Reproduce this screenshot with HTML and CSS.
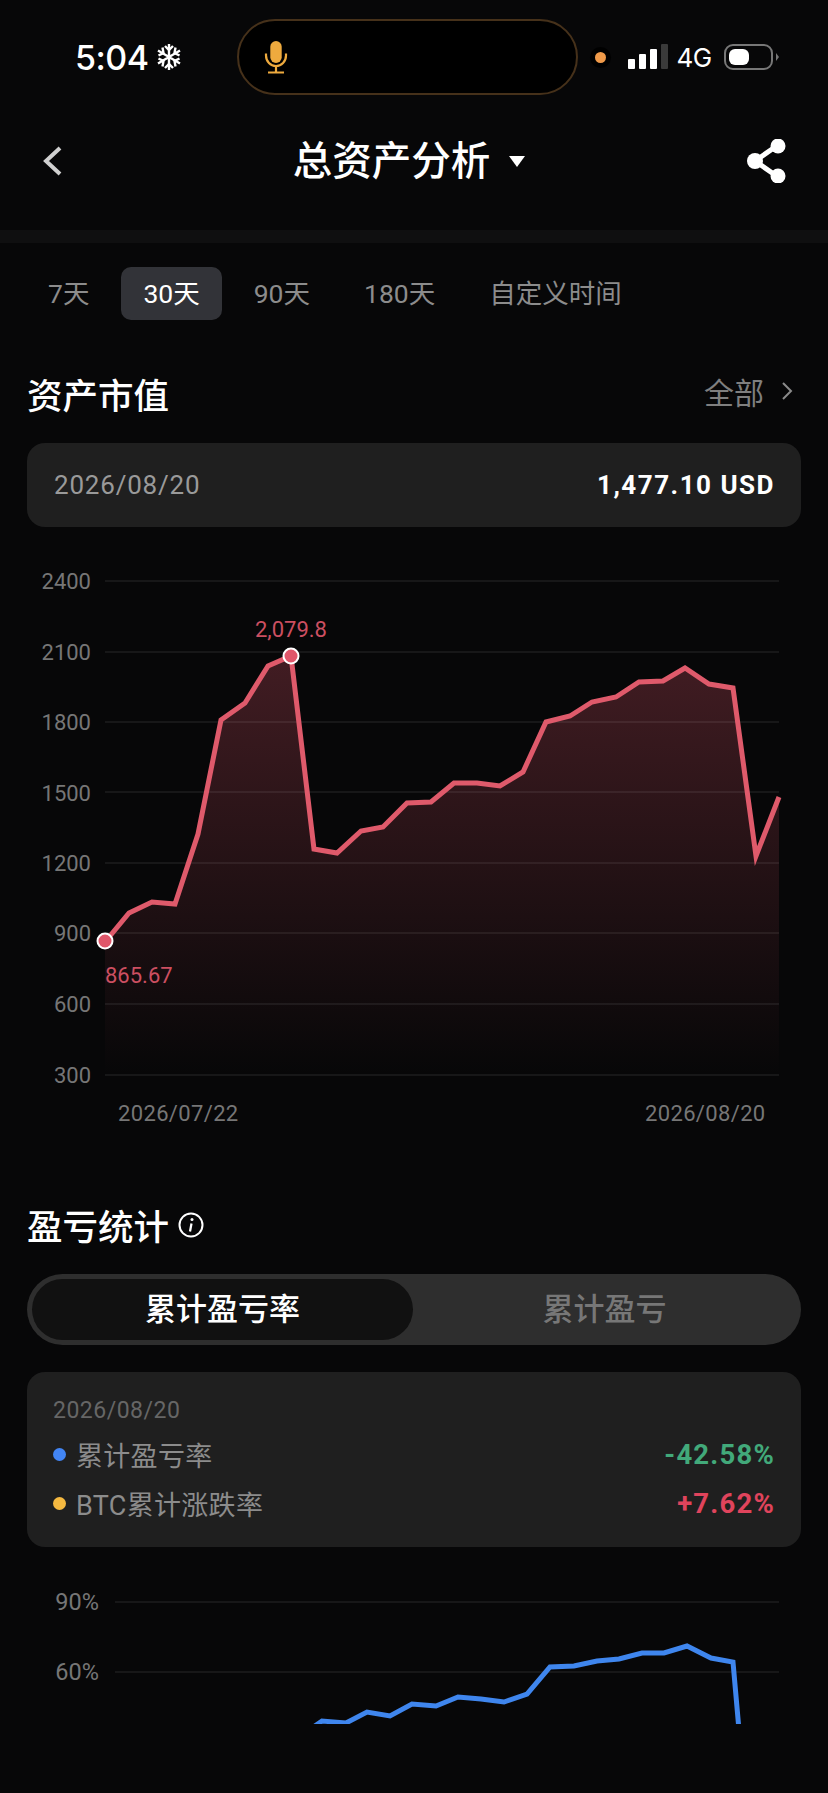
FILE: index.html
```html
<!DOCTYPE html>
<html lang="zh-CN">
<head>
    <meta charset="UTF-8">
    <meta name="viewport" content="width=device-width, initial-scale=1.0">
    <title>总资产分析</title>
    <link rel="stylesheet" href="styles.css">
</head>
<body>
    <div class="status-bar">
        <span class="time">5:04</span>
        <svg class="snow" width="26" height="28" viewBox="0 0 26 28">
            <g stroke="#fff" stroke-width="2.4" fill="none">
                <path d="M13 1V27M2 7.5L24 20.5M24 7.5L2 20.5"/>
                <path d="M9 3L13 7L17 3M9 25L13 21L17 25"/>
                <path d="M2.5 12.5L7.5 10L6.5 4.5M23.5 15.5L18.500 18L19.500 23.500"/>
                <path d="M23.500 12.500L18.500 10L19.500 4.500M2.500 15.500L7.500 18L6.500 23.500"/>
            </g>
        </svg>
        <div class="island">
            <svg class="mic" width="24" height="34" viewBox="0 0 24 34">
                <rect x="6.300" y="1" width="11.400" height="22" rx="5.700" fill="#eeaa3e"/>
                <path d="M2 13.500V15.500C2 21.500 6.500 26 12 26C17.500 26 22 21.500 22 15.500V13.500M12 26V32.500M4 32.500H20" stroke="#eeaa3e" stroke-width="2.200" fill="none"/>
            </svg>
        </div>
        <span class="cam-dot"></span>
        <div class="signal">
            <i class="bar b1"></i><i class="bar b2"></i><i class="bar b3"></i><i class="bar b4"></i>
        </div>
        <span class="net">4G</span>
        <div class="battery"><i class="level"></i></div>
        <i class="battery-tip"></i>
    </div>

    <div class="nav">
        <svg class="back" width="20" height="30" viewBox="0 0 20 30">
            <path d="M17 2L3 15L17 28" stroke="#d0d0d0" stroke-width="4" fill="none"/>
        </svg>
        <div class="nav-title">
            <span>总资产分析</span>
            <i class="caret"></i>
        </div>
        <svg class="share" width="42" height="44" viewBox="0 0 42 44">
            <path d="M33 6L10 22L33 38" stroke="#fff" stroke-width="5" fill="none"/>
            <circle cx="10" cy="22" r="8" fill="#fff"/>
            <circle cx="33" cy="7" r="7.500" fill="#fff"/>
            <circle cx="33" cy="37" r="7.500" fill="#fff"/>
        </svg>
    </div>
    <div class="band"></div>

    <div class="tabs">
        <span class="tab">7天</span>
        <span class="tab active">30天</span>
        <span class="tab">90天</span>
        <span class="tab">180天</span>
        <span class="tab">自定义时间</span>
    </div>

    <div class="section-head first">
        <h2>资产市值</h2>
        <div class="more">
            <span>全部</span>
            <svg width="12" height="20" viewBox="0 0 12 20">
                <path d="M2 2L10 10L2 18" stroke="#8a8a8a" stroke-width="2" fill="none"/>
            </svg>
        </div>
    </div>

    <div class="card value-card">
        <span class="date">2026/08/20</span>
        <span class="amount">1,477.10 USD</span>
    </div>

    <svg class="chart chart-main" width="828" height="580" viewBox="0 560 828 580">
        <defs>
            <linearGradient id="areaFill" gradientUnits="userSpaceOnUse" x1="0" y1="656" x2="0" y2="1075">
                <stop offset="0" stop-color="#e0566a" stop-opacity="0.27"/>
                <stop offset="1" stop-color="#e0566a" stop-opacity="0"/>
            </linearGradient>
        </defs>
        <path fill="url(#areaFill)" d="M105 942L129 913L152 902L175 904L198 834L221 720L245 703L268 666L291 656L314 849L337 853L361 831L383 827L407 803L431 802L454 783L477 783L500 786L523 772L546 722L570 716L592 702L616 697L639 682L663 681L685 668L709 684L733 688L756 856L779 797L779 1075L105 1075Z"/>
        <g class="grid">
            <path d="M105 581H779M105 652H779M105 722H779M105 792H779M105 863H779M105 933H779M105 1004H779M105 1075H779"/>
        </g>
        <g class="y-label">
            <text x="91" y="589">2400</text>
            <text x="91" y="660">2100</text>
            <text x="91" y="730">1800</text>
            <text x="91" y="801">1500</text>
            <text x="91" y="871">1200</text>
            <text x="91" y="941">900</text>
            <text x="91" y="1012">600</text>
            <text x="91" y="1083">300</text>
        </g>
        <polyline class="line-red" points="105,942 129,913 152,902 175,904 198,834 221,720 245,703 268,666 291,656 314,849 337,853 361,831 383,827 407,803 431,802 454,783 477,783 500,786 523,772 546,722 570,716 592,702 616,697 639,682 663,681 685,668 709,684 733,688 756,856 779,797"/>
        <circle class="point" cx="291" cy="656" r="7.500"/>
        <circle class="point" cx="105" cy="941" r="7.500"/>
        <text class="peak" x="255" y="637">2,079.8</text>
        <text class="peak" x="105" y="983">865.67</text>
        <text class="x-label" x="118" y="1121">2026/07/22</text>
        <text class="x-label" x="645" y="1121">2026/08/20</text>
    </svg>

    <div class="section-head second">
        <h2>盈亏统计</h2>
        <svg class="info" width="26" height="26" viewBox="0 0 26 26">
            <circle cx="13" cy="13" r="11.500" stroke="#fff" stroke-width="2" fill="none"/>
            <circle cx="14" cy="7.500" r="1.500" fill="#fff"/>
            <path d="M13.500 11.500L12 19.500" stroke="#fff" stroke-width="2.200" fill="none"/>
        </svg>
    </div>

    <div class="switch">
        <span class="switch-item on">累计盈亏率</span>
        <span class="switch-item">累计盈亏</span>
    </div>

    <div class="card stat-card">
        <div class="stat-date">2026/08/20</div>
        <div class="stat-row">
            <i class="dot blue"></i>
            <span class="stat-name">累计盈亏率</span>
            <span class="stat-val down">-42.58%</span>
        </div>
        <div class="stat-row">
            <i class="dot yellow"></i>
            <span class="stat-name">BTC累计涨跌率</span>
            <span class="stat-val up">+7.62%</span>
        </div>
    </div>

    <svg class="chart chart-rate" width="828" height="144" viewBox="0 1580 828 144">
        <g class="grid">
            <path d="M115 1602H779M115 1672H779"/>
        </g>
        <g class="y-label">
            <text class="pct" x="99" y="1610">90%</text>
            <text class="pct" x="99" y="1680">60%</text>
        </g>
        <polyline class="line-blue" points="312,1728 322,1721 346,1723 367,1712 390,1716 412,1704 436,1706 458,1697 481,1699 504,1702 527,1694 550,1667 574,1666 597,1661 619,1659 642,1653 664,1653 687,1646 711,1658 733,1662 739,1730"/>
    </svg>
</body>
</html>
```

FILE: styles.css
```css
* {
    box-sizing: border-box;
}
body {
    margin: 0;
    width: 828px;
    height: 1793px;
    overflow: hidden;
    background-color: #070708;
    color: #fff;
    font-family: Roboto, "Noto Sans CJK SC", sans-serif;
}
i {
    display: block;
}
h2 {
    margin: 4px 0 0;
    font-size: 35.500px;
    font-weight: 500;
    line-height: 50px;
}

/* status bar */
.status-bar {
    display: flex;
    align-items: center;
    height: 76px;
    margin-top: 19px;
    padding-left: 75px;
}
.time {
    width: 81px;
    font-family: Inter, sans-serif;
    font-size: 34px;
    font-weight: 500;
    letter-spacing: -0.500px;
}
.snow {
    flex: none;
}
.island {
    display: flex;
    align-items: center;
    width: 341px;
    height: 76px;
    margin-left: 55px;
    padding-left: 25px;
    border: 2px solid #46311a;
    border-radius: 38px;
    background-color: #000;
}
.cam-dot {
    width: 11px;
    height: 11px;
    margin-left: 17px;
    border-radius: 50%;
    background-color: #f09a4a;
    box-shadow: 0 0 0 5px #000;
}
.signal {
    display: flex;
    align-items: flex-end;
    gap: 4.500px;
    height: 25px;
    margin-left: 22px;
    margin-top: -1px;
}
.bar {
    width: 6.500px;
    border-radius: 1px;
    background-color: #fff;
}
.b1 { height: 10px; }
.b2 { height: 15px; }
.b3 { height: 20px; }
.b4 { height: 25px; background-color: #3a3a3a; }
.net {
    margin-left: 9px;
    font-family: Inter, sans-serif;
    font-size: 26px;
    letter-spacing: -0.500px;
}
.battery {
    width: 49px;
    height: 26px;
    margin-left: 12px;
    padding: 3px;
    border: 2px solid #777;
    border-radius: 9px;
}
.level {
    width: 20px;
    height: 16px;
    border-radius: 6px;
    background-color: #fff;
}
.battery-tip {
    width: 0;
    height: 0;
    margin-left: 3px;
    border-left: 3px solid #777;
    border-top: 4px solid transparent;
    border-bottom: 4px solid transparent;
}

/* nav */
.nav {
    display: flex;
    align-items: center;
    justify-content: space-between;
    height: 135px;
    padding: 0 41px 4px 43px;
}
.nav-title {
    display: flex;
    align-items: center;
    margin-left: 10px;
    margin-top: -6px;
    font-size: 39.500px;
    font-weight: 500;
}
.caret {
    width: 0;
    height: 0;
    margin-left: 19px;
    margin-top: 7px;
    border-top: 11px solid #fff;
    border-left: 8px solid transparent;
    border-right: 8px solid transparent;
}
.band {
    height: 13px;
    background-color: #0f0f10;
}

/* range tabs */
.tabs {
    display: flex;
    gap: 10px;
    margin-top: 24px;
    padding-left: 26px;
}
.tab {
    height: 53px;
    padding: 0 22px;
    border-radius: 10px;
    color: #8c8c8c;
    font-size: 26.500px;
    line-height: 53px;
}
.tab.active {
    background-color: #323338;
    color: #fff;
}

/* sections */
.section-head {
    display: flex;
    align-items: center;
    height: 50px;
    padding: 0 35px 0 27px;
}
.section-head.first {
    justify-content: space-between;
    margin-top: 50px;
}
.section-head.second {
    margin-top: 60px;
}
.section-head.second h2 {
    margin-top: 6px;
}
.more {
    display: flex;
    align-items: center;
    gap: 17px;
    margin-top: -9px;
    color: #7f7f7f;
    font-size: 30px;
}
.info {
    margin-left: 9px;
}
.card {
    margin: 0 27px;
    border-radius: 18px;
    background-color: #1f1f1f;
}
.value-card {
    display: flex;
    align-items: center;
    justify-content: space-between;
    height: 84px;
    margin-top: 23px;
    padding: 0 26px 0 27px;
    font-size: 26px;
}
.date {
    color: #9a9a9a;
    letter-spacing: 0.800px;
}
.amount {
    font-weight: 700;
    letter-spacing: 1.500px;
}

/* charts */
.chart {
    display: block;
}
.chart-main {
    margin-top: 33px;
}
.chart-rate {
    margin-top: 33px;
}
.grid path {
    stroke: rgba(255, 255, 255, 0.09);
    stroke-width: 1.500;
    fill: none;
}
.y-label text {
    fill: #767676;
    font-size: 22px;
    text-anchor: end;
}
.y-label .pct {
    font-size: 23.500px;
}
.x-label {
    fill: #767676;
    font-size: 22px;
    letter-spacing: 0.350px;
}
.peak {
    fill: #cc4f61;
    font-size: 22px;
}
.line-red {
    fill: none;
    stroke: #df5a6b;
    stroke-width: 5;
}
.line-blue {
    fill: none;
    stroke: #3f86ee;
    stroke-width: 5;
}
.point {
    fill: #e0566a;
    stroke: #fff;
    stroke-width: 2;
}

/* switch */
.switch {
    display: flex;
    height: 71px;
    margin: 24px 27px 0;
    padding: 5px;
    border-radius: 36px;
    background-color: #2e2e2e;
}
.switch-item {
    flex: 1;
    border-radius: 31px;
    color: #777;
    font-size: 31px;
    font-weight: 500;
    line-height: 61px;
    text-align: center;
}
.switch-item.on {
    flex: none;
    width: 381px;
    background-color: #111;
    color: #fff;
}

/* stats */
.stat-card {
    height: 175px;
    margin-top: 27px;
    padding: 25px 26px 0 26px;
}
.stat-date {
    margin-bottom: 5px;
    color: #666;
    font-size: 23px;
    line-height: 28px;
    letter-spacing: 0.500px;
}
.stat-row {
    display: flex;
    align-items: center;
    height: 49px;
    font-size: 27px;
}
.dot {
    width: 13px;
    height: 13px;
    margin-right: 10px;
    border-radius: 50%;
}
.blue { background-color: #4285f4; }
.yellow { background-color: #f5b940; }
.stat-name {
    flex: 1;
    color: #8c8c8c;
    letter-spacing: 0.300px;
}
.stat-val {
    font-size: 27.500px;
    font-weight: 700;
    letter-spacing: 1.200px;
}
.down { color: #42a97a; }
.up { color: #e0445c; }
```
